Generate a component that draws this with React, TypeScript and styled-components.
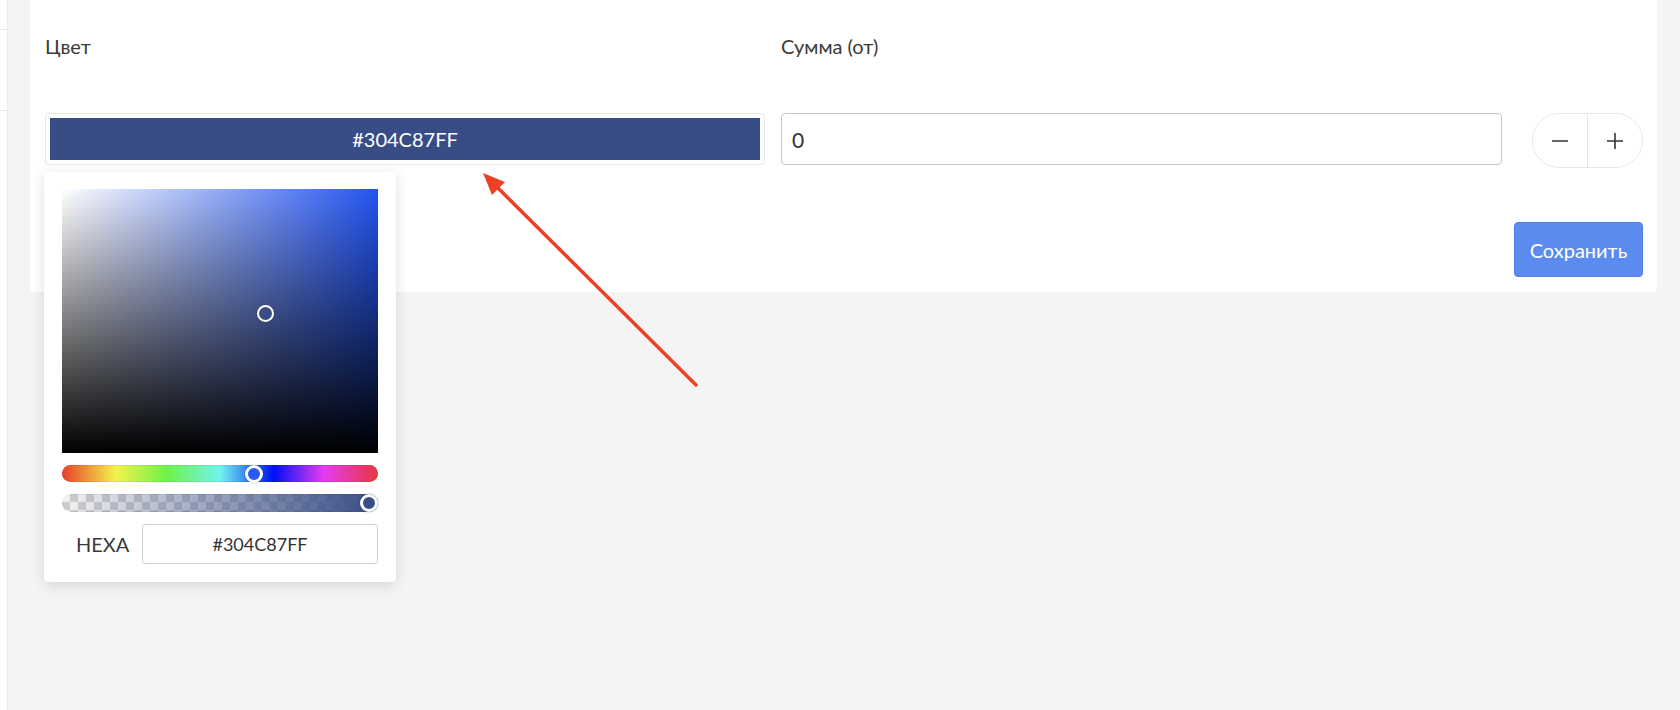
import { useState } from 'react'
import styled, { createGlobalStyle } from 'styled-components'

const HEX = '#304C87FF'
const SWATCH = '#384d86'
const HSV = { h: 220.7, s: 0.644, v: 0.53 }

const GlobalStyle = createGlobalStyle`
  * {
    box-sizing: border-box;
  }

  body {
    margin: 0;
    background: #f4f4f4;
    font-family: Lato, 'Open Sans', sans-serif;
    color: #333;
  }
`

const Page = styled.div`
  position: relative;
  display: flex;
  height: 710px;
  overflow: hidden;
`

const Sidebar = styled.aside`
  flex: 0 0 8px;
  display: flex;
  flex-direction: column;
  background: #fff;
  border-right: 1px solid #ebebeb;
`

const SideRow = styled.div<{ $h: number }>`
  height: ${({ $h }) => $h}px;
  border-bottom: 1px solid #e5e5e5;
`

const Main = styled.main`
  flex: 1;
  padding: 0 23px 0 22px;
`

const Card = styled.section`
  background: #fff;
  border-radius: 0 0 4px 4px;
  padding: 34px 14px 15px 15px;
`

const Row = styled.div`
  display: flex;
  align-items: flex-start;
  gap: 16px;
`

const Column = styled.div<{ $width?: number }>`
  position: relative;
  display: flex;
  flex-direction: column;
  gap: 55px;
  ${({ $width }) => ($width ? `flex: 0 0 ${$width}px;` : 'flex: 1;')}
`

const Label = styled.label`
  font-size: 20px;
  line-height: 24px;
  color: #3a3a3a;
`

const ColorField = styled.div`
  height: 52px;
  padding: 4px;
  border: 1px solid #e6e6e6;
  border-radius: 4px;
`

const Swatch = styled.div`
  height: 100%;
  display: flex;
  align-items: center;
  justify-content: center;
  background: ${SWATCH};
  color: #fff;
  font-size: 20px;
`

const NumberInput = styled.input`
  height: 52px;
  width: 100%;
  padding: 0 10px;
  border: 1px solid #c6c6c6;
  border-radius: 4px;
  font: inherit;
  font-size: 21px;
  color: #333;
  outline: none;
`

const Stepper = styled.div`
  flex: 0 0 111px;
  margin: 79px 0 0 14px;
  height: 55px;
  display: flex;
  border: 1px solid #e6e6e6;
  border-radius: 28px;
  overflow: hidden;
`

const StepButton = styled.button`
  flex: 1;
  display: flex;
  align-items: center;
  justify-content: center;
  background: #fff;
  border: none;
  padding: 0;
  color: #333;

  & + & {
    border-left: 1px solid #e6e6e6;
  }
`

const Footer = styled.div`
  display: flex;
  justify-content: flex-end;
  margin-top: 54px;
`

const SaveButton = styled.button`
  width: 129px;
  height: 55px;
  background: #5b8bef;
  border: 1px solid #4f7fe4;
  border-radius: 4px;
  color: #fff;
  font-family: inherit;
  font-size: 20px;
`

const Picker = styled.div`
  position: absolute;
  top: 138px;
  left: -1px;
  z-index: 5;
  width: 352px;
  padding: 17px 18px 18px;
  display: flex;
  flex-direction: column;
  gap: 12px;
  background: #fff;
  border-radius: 4px;
  box-shadow: 0 3px 14px rgba(0, 0, 0, 0.13);
`

const Saturation = styled.div<{ $hue: number }>`
  position: relative;
  height: 264px;
  background: linear-gradient(to top, #000, rgba(0, 0, 0, 0)),
    linear-gradient(to right, #fff, hsl(${({ $hue }) => $hue + 5}, 88%, 54%));
`

const Pointer = styled.span`
  position: absolute;
  width: 17px;
  height: 17px;
  margin: -8.5px 0 0 -8.5px;
  border: 2.5px solid #fff;
  border-radius: 50%;
  box-shadow: 0 0 1px rgba(0, 0, 0, 0.4);
`

const Track = styled.div<{ $kind: 'hue' | 'alpha' }>`
  position: relative;
  height: ${({ $kind }) => ($kind === 'hue' ? 17 : 18)}px;
  border-radius: 9px;
  box-shadow: inset 0 0 0 1px rgba(0, 0, 0, 0.06);
  background: ${({ $kind }) =>
    $kind === 'hue'
      ? 'linear-gradient(to right, #e8402a 0%, #f4f24c 17%, #6ff24a 33%, #72f3ef 50%, #0010f4 67%, #e63cf0 83%, #e8363e 100%)'
      : `linear-gradient(to right, rgba(56, 77, 134, 0), ${SWATCH}), repeating-conic-gradient(#cfcfcf 0% 25%, #f3f3f3 0% 50%) 0 0 / 16px 16px`};
`

const Thumb = styled.span<{ $fill: string }>`
  position: absolute;
  top: 50%;
  width: 18px;
  height: 18px;
  margin-top: -9px;
  border: 3px solid #fff;
  border-radius: 50%;
  background: ${({ $fill }) => $fill};
  box-shadow: 0 0 2px rgba(0, 0, 0, 0.35);
`

const HexRow = styled.div`
  display: flex;
  align-items: center;
`

const HexLabel = styled.span`
  flex: 0 0 80px;
  padding-left: 14px;
  font-size: 20px;
  color: #3a3a3a;
`

const HexInput = styled.input`
  flex: 1;
  height: 40px;
  border: 1px solid #cfcfcf;
  border-radius: 3px;
  text-align: center;
  font: inherit;
  font-size: 18px;
  color: #333;
  outline: none;
`

const Annotation = styled.svg`
  position: absolute;
  inset: 0;
  pointer-events: none;
  z-index: 10;
`

function MinusIcon() {
  return (
    <svg width="18" height="18" viewBox="0 0 18 18">
      <path d="M1 9h16" stroke="currentColor" strokeWidth="1.6" />
    </svg>
  )
}

function PlusIcon() {
  return (
    <svg width="18" height="18" viewBox="0 0 18 18">
      <path d="M1 9h16M9 1v16" stroke="currentColor" strokeWidth="1.6" />
    </svg>
  )
}

export default function App() {
  const [amount, setAmount] = useState(0)
  const thumbTravel = 316 - 18

  return (
    <Page>
      <GlobalStyle />
      <Sidebar>
        <SideRow $h={30} />
        <SideRow $h={81} />
      </Sidebar>

      <Main>
        <Card>
          <Row>
            <Column $width={720}>
              <Label>Цвет</Label>
              <ColorField>
                <Swatch>{HEX}</Swatch>
              </ColorField>

              <Picker>
                <Saturation $hue={HSV.h}>
                  <Pointer style={{ left: `${HSV.s * 100}%`, top: `${(1 - HSV.v) * 100}%` }} />
                </Saturation>
                <Track $kind="hue">
                  <Thumb $fill={`hsl(${HSV.h + 5}, 86%, 55%)`} style={{ left: (HSV.h / 360) * thumbTravel }} />
                </Track>
                <Track $kind="alpha">
                  <Thumb $fill={SWATCH} style={{ left: thumbTravel }} />
                </Track>
                <HexRow>
                  <HexLabel>HEXA</HexLabel>
                  <HexInput readOnly value={HEX} />
                </HexRow>
              </Picker>
            </Column>

            <Column>
              <Label>Сумма (от)</Label>
              <NumberInput value={amount} onChange={(e) => setAmount(Number(e.target.value) || 0)} />
            </Column>

            <Stepper>
              <StepButton onClick={() => setAmount((v) => v - 1)}>
                <MinusIcon />
              </StepButton>
              <StepButton onClick={() => setAmount((v) => v + 1)}>
                <PlusIcon />
              </StepButton>
            </Stepper>
          </Row>

          <Footer>
            <SaveButton>Сохранить</SaveButton>
          </Footer>
        </Card>
      </Main>

      <Annotation width="1680" height="710" viewBox="0 0 1680 710">
        <line x1="696" y1="385" x2="496" y2="186" stroke="#ec4127" strokeWidth="3.5" strokeLinecap="round" />
        <polygon points="483,173 505,182 492,195" fill="#ec4127" />
      </Annotation>
    </Page>
  )
}
